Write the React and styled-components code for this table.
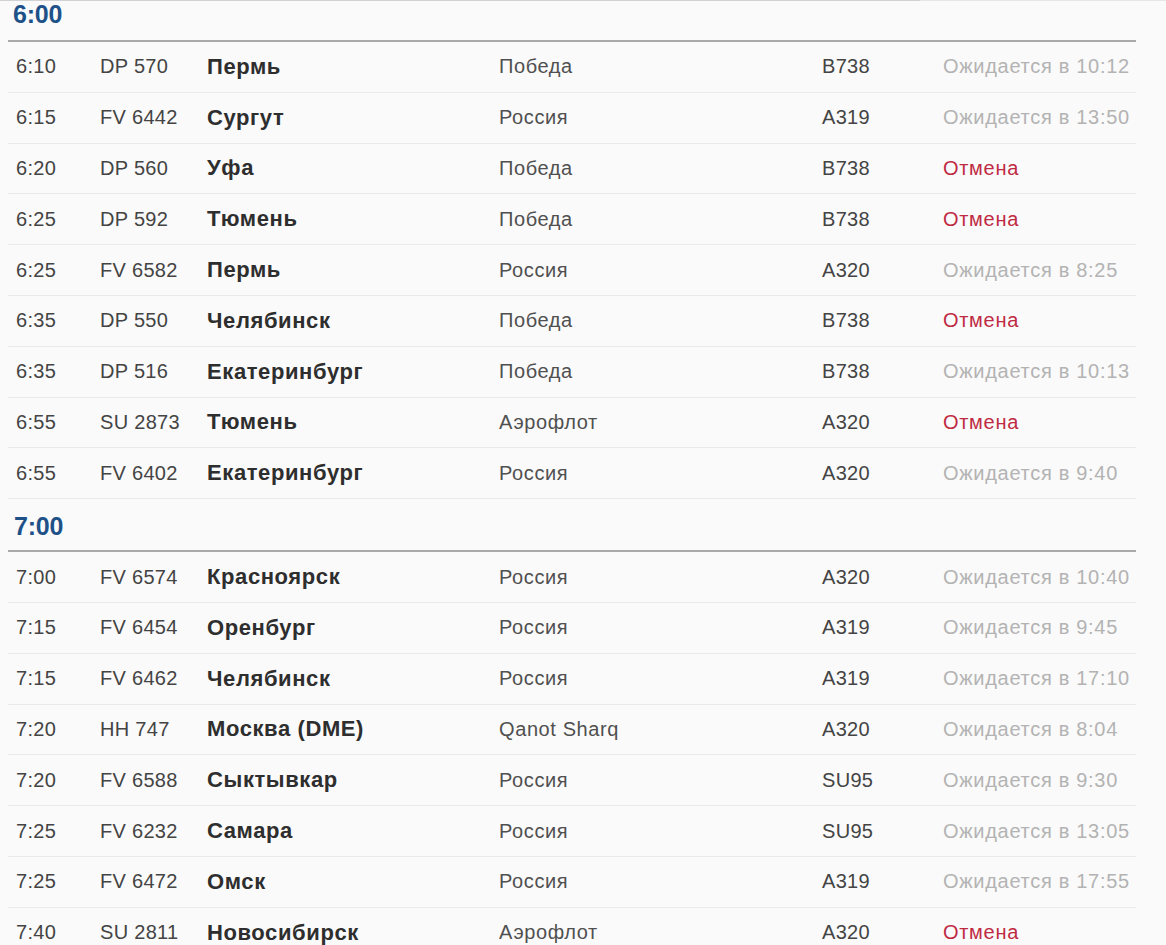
import React from "react";
import styled, { createGlobalStyle } from "styled-components";

const GlobalStyle = createGlobalStyle`
  html, body {
    margin: 0;
    padding: 0;
    background: #fafafa;
  }
  body {
    font-family: "Liberation Sans", Arial, sans-serif;
    overflow: hidden;
  }
`;

const Page = styled.div`
  width: 1166px;
  height: 945px;
  overflow: hidden;
  background: #fafafa;
`;

const TopStrip = styled.div`
  display: flex;
  height: 1px;
`;

const StripPart = styled.div`
  height: 1px;
  background: ${(p) => p.$tone};
  flex: ${(p) => (p.$grow ? "1" : "none")};
  width: ${(p) => (p.$w ? `${p.$w}px` : "auto")};
`;

const Board = styled.div`
  margin-left: 8px;
  width: 1128px;
`;

const GroupHeader = styled.div`
  padding: ${(p) => (p.$first ? "0 0 13px 5px" : "14px 0 11px 6px")};
  border-bottom: 2px solid #a9a9a9;
  font-size: 25px;
  line-height: 26px;
  font-weight: bold;
  color: #1f5189;
  letter-spacing: -0.2px;
`;

const Row = styled.div`
  display: grid;
  grid-template-columns: 84px 107px 292px 323px 121px 1fr;
  align-items: center;
  height: 49.8px;
  padding-left: 8px;
  border-bottom: 1px solid #eaeaea;
  font-size: 20px;
  letter-spacing: 0.3px;
  color: #444;
`;

const Cell = styled.div`
  white-space: nowrap;
`;

const City = styled.div`
  white-space: nowrap;
  font-weight: bold;
  font-size: 22px;
  letter-spacing: 0.6px;
  color: #2e2e2e;
`;

const Airline = styled.div`
  white-space: nowrap;
  letter-spacing: 0.6px;
  color: #505050;
`;

const Status = styled.div`
  white-space: nowrap;
  letter-spacing: 0.7px;
  color: ${(p) => (p.$cancel ? "#bf2a43" : "#b3b3b3")};
`;

const groups = [
  {
    hour: "6:00",
    rows: [
      ["6:10", "DP 570", "Пермь", "Победа", "B738", "Ожидается в 10:12"],
      ["6:15", "FV 6442", "Сургут", "Россия", "A319", "Ожидается в 13:50"],
      ["6:20", "DP 560", "Уфа", "Победа", "B738", "Отмена"],
      ["6:25", "DP 592", "Тюмень", "Победа", "B738", "Отмена"],
      ["6:25", "FV 6582", "Пермь", "Россия", "A320", "Ожидается в 8:25"],
      ["6:35", "DP 550", "Челябинск", "Победа", "B738", "Отмена"],
      ["6:35", "DP 516", "Екатеринбург", "Победа", "B738", "Ожидается в 10:13"],
      ["6:55", "SU 2873", "Тюмень", "Аэрофлот", "A320", "Отмена"],
      ["6:55", "FV 6402", "Екатеринбург", "Россия", "A320", "Ожидается в 9:40"],
    ],
  },
  {
    hour: "7:00",
    rows: [
      ["7:00", "FV 6574", "Красноярск", "Россия", "A320", "Ожидается в 10:40"],
      ["7:15", "FV 6454", "Оренбург", "Россия", "A319", "Ожидается в 9:45"],
      ["7:15", "FV 6462", "Челябинск", "Россия", "A319", "Ожидается в 17:10"],
      ["7:20", "HH 747", "Москва (DME)", "Qanot Sharq", "A320", "Ожидается в 8:04"],
      ["7:20", "FV 6588", "Сыктывкар", "Россия", "SU95", "Ожидается в 9:30"],
      ["7:25", "FV 6232", "Самара", "Россия", "SU95", "Ожидается в 13:05"],
      ["7:25", "FV 6472", "Омск", "Россия", "A319", "Ожидается в 17:55"],
      ["7:40", "SU 2811", "Новосибирск", "Аэрофлот", "A320", "Отмена"],
    ],
  },
];

export default function App() {
  return (
    <Page>
      <GlobalStyle />
      <TopStrip>
        <StripPart $tone="#d2d2d2" $w={920} />
        <StripPart $tone="#e6e6e6" $grow />
      </TopStrip>
      <Board>
        {groups.map((g, gi) => (
          <React.Fragment key={g.hour}>
            <GroupHeader $first={gi === 0}>{g.hour}</GroupHeader>
            {g.rows.map((r, i) => (
              <Row key={i}>
                <Cell>{r[0]}</Cell>
                <Cell>{r[1]}</Cell>
                <City>{r[2]}</City>
                <Airline>{r[3]}</Airline>
                <Cell>{r[4]}</Cell>
                <Status $cancel={r[5] === "Отмена"}>{r[5]}</Status>
              </Row>
            ))}
          </React.Fragment>
        ))}
      </Board>
    </Page>
  );
}
